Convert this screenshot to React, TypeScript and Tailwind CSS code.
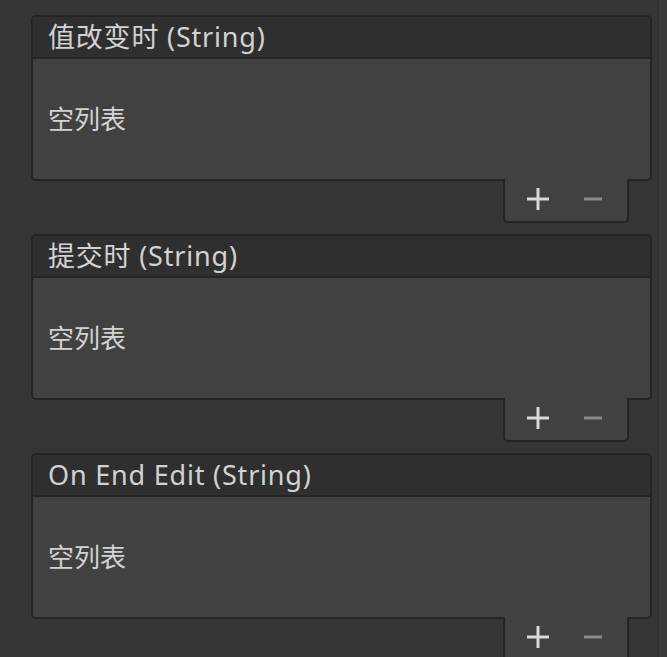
const FONT = "font-['Noto_Sans','Noto_Sans_CJK_SC',sans-serif]";

type EventListProps = {
  title: string;
};

function PlusIcon() {
  return (
    <svg width="24" height="24" viewBox="0 0 24 24" className="text-[#dadada]">
      <rect x="1" y="10.5" width="22" height="3" fill="currentColor" />
      <rect x="10.5" y="1" width="3" height="22" fill="currentColor" />
    </svg>
  );
}

function MinusIcon() {
  return (
    <svg width="20" height="24" viewBox="0 0 20 24" className="text-[#8a8a8a]">
      <rect x="1" y="10.5" width="18" height="3" fill="currentColor" />
    </svg>
  );
}

function EventList({ title }: EventListProps) {
  return (
    <div className="flex flex-col">
      <div className="rounded-[5px] border-2 border-[#242424] overflow-hidden">
        <div className="h-[42px] bg-[#2f2f2f] border-b-2 border-[#252525] flex items-center pl-[15px]">
          <span className="text-[27px] tracking-[0.8px] leading-none text-[#d2d2d2] -mt-[2px]">{title}</span>
        </div>
        <div className="h-[120px] bg-[#414141] flex items-center pl-[15px]">
          <span className="text-[26px] leading-none text-[#d2d2d2]">空列表</span>
        </div>
      </div>
      <div className="flex justify-end pr-[23px]">
        <div className="-mt-[2px] w-[126px] h-[44px] bg-[#414141] border-2 border-t-0 border-[#242424] rounded-b-[5px] flex items-center">
          <div className="ml-[21px] mt-[-2px]">
            <PlusIcon />
          </div>
          <div className="ml-[33px] mt-[-2px]">
            <MinusIcon />
          </div>
        </div>
      </div>
    </div>
  );
}

export default function App() {
  return (
    <div className={`w-[667px] h-[657px] overflow-hidden bg-[#353535] flex ${FONT}`}>
      <div className="flex-1 pl-[31px] pr-[6px] pt-[15px] flex flex-col gap-[11px]">
        <EventList title="值改变时 (String)" />
        <EventList title="提交时 (String)" />
        <EventList title="On End Edit (String)" />
      </div>
      <div className="w-[9px] bg-[#3a3a3a] border-l border-[#303030]" />
    </div>
  );
}
